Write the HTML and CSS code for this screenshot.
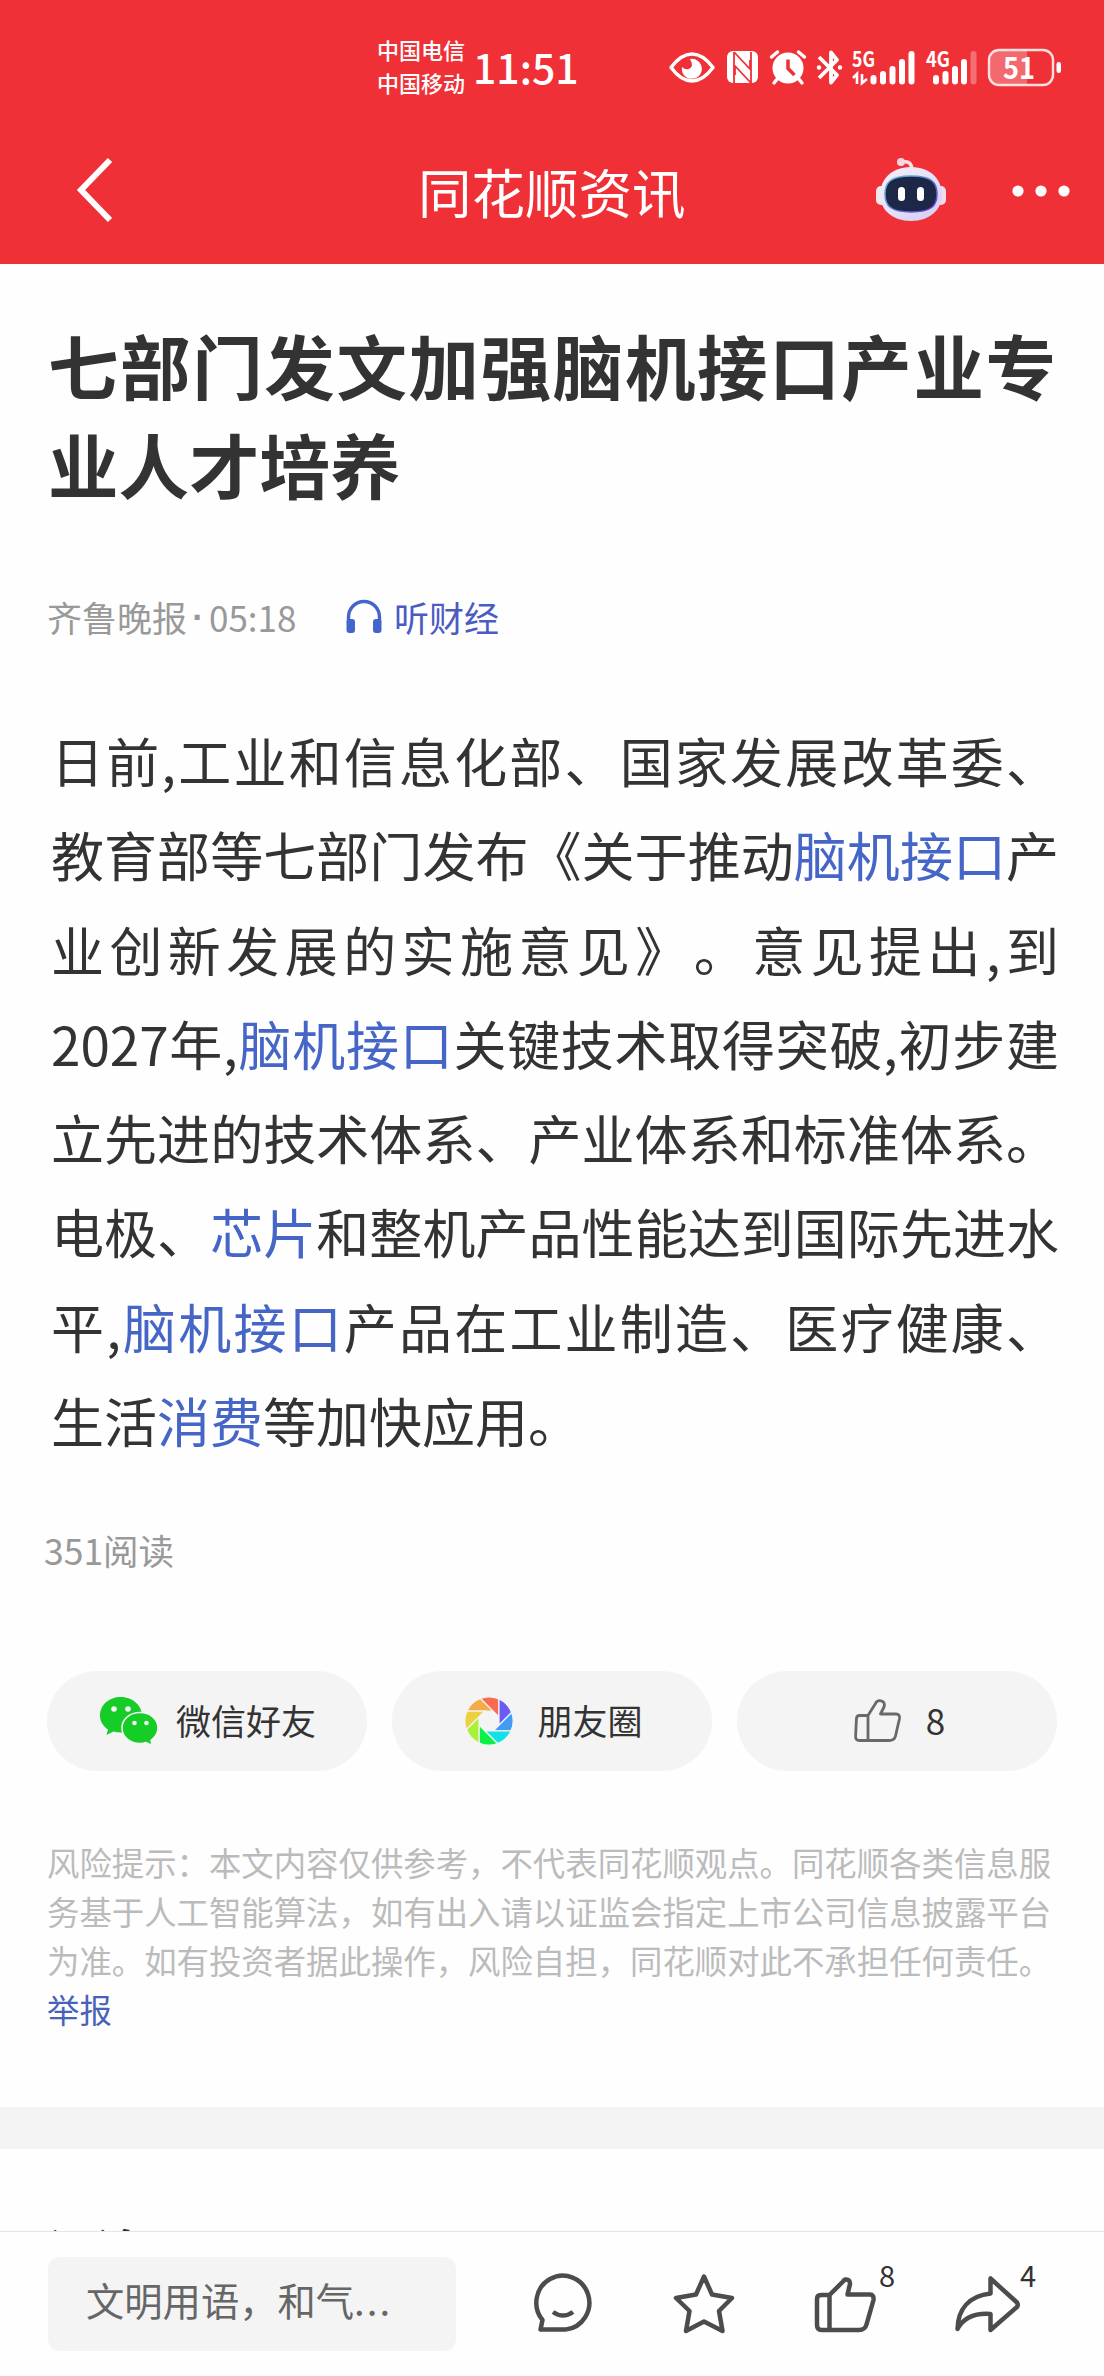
FILE: index.html
```html
<!DOCTYPE html>
<html lang="zh-CN">
<head>
<meta charset="UTF-8">
<title>同花顺资讯</title>
<link rel="stylesheet" href="styles.css">
</head>
<body>

<div class="page">

  <header class="header">
    <div class="status">
      <div class="carriers">
        <span>中国电信</span>
        <span>中国移动</span>
      </div>
      <span class="time">11:51</span>
      <svg class="status-icons" width="400" height="64" viewBox="664 36 400 64" fill="#fff">
        <!-- eye -->
        <path d="M670 67.500Q680 54 691 54T712 67.500Q702 81 691 81T670 67.500Z" fill="none" stroke="#fff" stroke-width="3.500" stroke-linejoin="round"/>
        <path d="M689 59a10 10 0 1 1-8 8q3 3 6.500 2 6-2 1.500-10Z"/>
        <!-- nfc -->
        <rect x="726" y="51" width="31" height="32" rx="6"/>
        <path d="M733 52v31M733 52l16 17v-9M750 83V52M750 83l-16-17v9" fill="none" stroke="#f03037" stroke-width="1.800"/>
        <!-- alarm -->
        <circle cx="787" cy="68" r="15.500"/>
        <path d="M770.500 57l6-5M803.500 57l-6-5M777 78l-4 5M797 78l4 5" stroke="#fff" stroke-width="3.500" stroke-linecap="round"/>
        <path d="M787 59.500v9l6.500 6.500" fill="none" stroke="#f03037" stroke-width="3.500"/>
        <!-- bluetooth -->
        <path d="M818 57l18 18-6 7.500v-30l6 7.500-18 18" fill="none" stroke="#fff" stroke-width="3.800" stroke-linejoin="round"/>
        <circle cx="818" cy="67.500" r="2.200"/>
        <circle cx="839" cy="67.500" r="2.200"/>
        <!-- 5G signal -->
        <text class="net" x="851" y="67" textLength="23" lengthAdjust="spacingAndGlyphs">5G</text>
        <path d="M852 78l4-4v10M861 74v9l5-4" fill="none" stroke="#fff" stroke-width="2.600"/>
        <rect x="869.500" y="75" width="6" height="9.500" rx="3"/>
        <rect x="879" y="71" width="6" height="13.500" rx="3"/>
        <rect x="888.500" y="66" width="6" height="18.500" rx="3"/>
        <rect x="898" y="59" width="6" height="25.500" rx="3"/>
        <rect x="907.500" y="51" width="6" height="33.500" rx="3"/>
        <!-- 4G signal -->
        <text class="net" x="925" y="67" textLength="24" lengthAdjust="spacingAndGlyphs">4G</text>
        <rect x="932" y="75" width="6" height="9.500" rx="3"/>
        <rect x="941.500" y="71" width="6" height="13.500" rx="3"/>
        <rect x="951" y="66" width="6" height="18.500" rx="3"/>
        <rect x="960" y="59" width="6" height="25.500" rx="3"/>
        <rect x="969.500" y="51" width="6" height="33.500" rx="3" opacity=".3"/>
        <!-- battery -->
        <path d="M1026 51h-28q-9 0-9 9v15q0 9 9 9h28Z" opacity=".28"/>
        <rect x="988" y="50" width="64" height="35" rx="10" fill="none" stroke="#fff" stroke-width="2.400" opacity=".85"/>
        <rect x="1055.500" y="62" width="4.500" height="11" rx="2.200"/>
        <text class="battery" x="1002" y="78.500" textLength="32" lengthAdjust="spacingAndGlyphs">51</text>
      </svg>
    </div>

    <div class="nav">
      <svg class="back" width="44" height="70" viewBox="0 0 44 70"><path d="M37 4L8 34l29 30" fill="none" stroke="#fff" stroke-width="6"/></svg>
      <span class="nav-title">同花顺资讯</span>
      <svg class="bot" width="72" height="68" viewBox="0 0 72 68">
        <defs>
          <linearGradient id="head" x1="0" y1="0" x2="1" y2="1">
            <stop offset="0" stop-color="#f7f0f8"/>
            <stop offset=".5" stop-color="#e3e2f6"/>
            <stop offset="1" stop-color="#d5c8f4"/>
          </linearGradient>
          <linearGradient id="rim" x1="0" y1="0" x2="1" y2="1">
            <stop offset="0" stop-color="#5fc3cf"/>
            <stop offset="1" stop-color="#6532d0"/>
          </linearGradient>
        </defs>
        <path d="M27 5q9-2 10 7" fill="none" stroke="#fbdde6" stroke-width="3.500"/>
        <circle cx="26" cy="5" r="4" fill="#fbd5de"/>
        <rect x="1" y="29" width="10" height="19" rx="5" fill="#f3e6f0"/>
        <rect x="61" y="29" width="10" height="19" rx="5" fill="#f0dcee"/>
        <path d="M36 10c21 0 31 14 31 28S55 64 36 64 5 52 5 38s10-28 31-28Z" fill="url(#head)"/>
        <path d="M36 19c20 0 26 6 26 18s-6 18-26 18-26-6-26-18 6-18 26-18Z" fill="#1d2748" stroke="url(#rim)" stroke-width="1.500"/>
        <rect x="23" y="30" width="7" height="14" rx="3.500" fill="#fff"/>
        <rect x="42" y="30" width="7" height="14" rx="3.500" fill="#fff"/>
      </svg>
      <svg class="more" width="60" height="12" viewBox="0 0 60 12" fill="#fff"><circle cx="7" cy="6" r="5.600"/><circle cx="30" cy="6" r="5.600"/><circle cx="53" cy="6" r="5.600"/></svg>
    </div>
  </header>

  <main class="content">
    <article class="article">
      <h1>
        <span class="line full">七部门发文加强脑机接口产业专</span>
        <span class="line">业人才培养</span>
      </h1>

      <div class="meta">
        <span class="source">齐鲁晚报<i>·</i>05:18</span>
        <svg width="38" height="36" viewBox="0 0 38 36">
          <path d="M3.500 24V18a15.500 15.500 0 0 1 31 0v6" fill="none" stroke="#4465cc" stroke-width="3.400"/>
          <rect x="1.500" y="20" width="8.500" height="14" rx="3" fill="#4465cc"/>
          <rect x="28" y="20" width="8.500" height="14" rx="3" fill="#4465cc"/>
        </svg>
        <span class="listen">听财经</span>
      </div>

      <p class="text">
        <span class="line full">日前,工业和信息化部、国家发展改革委、</span>
        <span class="line full">教育部等七部门发布《关于推动<a>脑机接口</a>产</span>
        <span class="line full">业创新发展的实施意见》。意见提出,到</span>
        <span class="line full">2027年,<a>脑机接口</a>关键技术取得突破,初步建</span>
        <span class="line full">立先进的技术体系、产业体系和标准体系。</span>
        <span class="line full">电极、<a>芯片</a>和整机产品性能达到国际先进水</span>
        <span class="line full">平,<a>脑机接口</a>产品在工业制造、医疗健康、</span>
        <span class="line">生活<a>消费</a>等加快应用。</span>
      </p>

      <div class="reads">351阅读</div>

      <div class="share">
        <div class="pill">
          <svg width="58" height="50" viewBox="0 0 58 50">
            <path d="M21 1C9 1 0 9 0 19.500c0 6 3 10.500 8 14L6.500 39l7-3.500q3.500 1 7.500 1c12 0 21-7.500 21-17S33 1 21 1Z" fill="#16cc27"/>
            <path d="M40 16.500c-10 0-18 6.500-18 15.500s8 15.500 18 15.500q3.500 0 6-1l6.500 3-1.500-5c4-3 7-7 7-12.500 0-9-8-15.500-18-15.500Z" fill="#16cc27" stroke="#f4f4f4" stroke-width="1.600"/>
            <g fill="#f4f4f4"><circle cx="14" cy="13" r="2.800"/><circle cx="28" cy="13" r="2.800"/><circle cx="34.500" cy="27" r="2.300"/><circle cx="46.500" cy="27" r="2.300"/></g>
          </svg>
          <span>微信好友</span>
        </div>
        <div class="pill moments">
          <svg width="50" height="50" viewBox="-25 -25 50 50" stroke="#f4f4f4" stroke-width="1.200">
            <path d="M-22-10A24 24 0 0 1-8.500-22.500L4.100-10Z" fill="#f5ab46"/>
            <path d="M-22-10A24 24 0 0 1-8.500-22.500L4.100-10Z" fill="#fa6b51" transform="rotate(45)"/>
            <path d="M-22-10A24 24 0 0 1-8.500-22.500L4.100-10Z" fill="#6b5bf5" transform="rotate(90)"/>
            <path d="M-22-10A24 24 0 0 1-8.500-22.500L4.100-10Z" fill="#429cf1" transform="rotate(135)"/>
            <path d="M-22-10A24 24 0 0 1-8.500-22.500L4.100-10Z" fill="#12e1e8" transform="rotate(180)"/>
            <path d="M-22-10A24 24 0 0 1-8.500-22.500L4.100-10Z" fill="#0af046" transform="rotate(225)"/>
            <path d="M-22-10A24 24 0 0 1-8.500-22.500L4.100-10Z" fill="#a9f137" transform="rotate(270)"/>
            <path d="M-22-10A24 24 0 0 1-8.500-22.500L4.100-10Z" fill="#ecd13f" transform="rotate(315)"/>
            <circle r="9.500" fill="#f4f4f4"/>
          </svg>
          <span>朋友圈</span>
        </div>
        <div class="pill like">
          <svg width="48" height="44" viewBox="0 0 48 44" fill="none" stroke="#696969" stroke-width="2.800" stroke-linejoin="round">
            <path d="M14 16.500H5.500Q2.500 16.500 2.400 20L1.600 37.500Q1.600 41.500 5.500 41.500H35Q40.500 41.500 41.500 37L45.500 19.500Q46 15 42 15H26.500L30 8Q31.500 3 27 1.800 23 1 21.500 4.500L14 16.500V41.500"/>
          </svg>
          <span>8</span>
        </div>
      </div>

      <p class="risk">
        <span class="line">风险提示：本文内容仅供参考，不代表同花顺观点。同花顺各类信息服</span>
        <span class="line">务基于人工智能算法，如有出入请以证监会指定上市公司信息披露平台</span>
        <span class="line">为准。如有投资者据此操作，风险自担，同花顺对此不承担任何责任。</span>
        <a class="line">举报</a>
      </p>
    </article>

    <section class="comments">
      <h2>评论</h2>
    </section>
  </main>

  <footer class="toolbar">
    <div class="input">文明用语，和气<span class="dots">...</span></div>
    <div class="actions">
      <div class="action">
        <svg width="64" height="62" viewBox="0 0 64 62"><path d="M35 57.500A26.500 27 0 1 0 11.500 48L9.500 57.500H35M22 40q10 7 20 0"/></svg>
      </div>
      <div class="action">
        <svg width="64" height="62" viewBox="0 0 64 62"><path d="M32 4.500L40 22.500 60 26 47 39 50.500 59 32 49.500 14 59 17.500 39 4 26 24 22.500Z"/></svg>
      </div>
      <div class="action">
        <svg width="64" height="62" viewBox="0 0 64 62"><path d="M16.500 23H8Q4 23 4 27V53Q4 58 8.500 58H46Q52 58 53.500 52.500L60.500 28Q61 22.500 57 22.500H34.500L37 12Q37 7 32.500 7.500 31 8 30 9.500L16.500 23V58"/></svg>
        <span class="count">8</span>
      </div>
      <div class="action">
        <svg width="64" height="62" viewBox="0 0 64 62"><path d="M36.500 6.500V21.500C15 24 4 37 3.500 57 10 45 21 41 36.500 42V58L63 35Q64.500 33 63 30.500L36.500 6.500Z"/></svg>
        <span class="count">4</span>
      </div>
    </div>
  </footer>

</div>

</body>
</html>
```
FILE: styles.css
```css
body {
  margin: 0;
  font-family: "Noto Sans CJK SC", sans-serif;
  color: #333;
  background: #fefefe;
  text-spacing-trim: space-all;
}

h1, h2, p {
  margin: 0;
}

svg {
  display: block;
  flex: none;
  overflow: visible;
}

.page {
  display: flex;
  flex-direction: column;
  height: 2376px;
  overflow: hidden;
}

.line {
  display: block;
  white-space: nowrap;
}

.full {
  text-align: justify;
  text-align-last: justify;
}

/* header */
.header {
  height: 264px;
  flex: none;
  background: #f03037;
  color: #fff;
}

.status {
  display: flex;
  align-items: center;
  height: 136px;
  padding-left: 377px;
}

.carriers {
  display: flex;
  flex-direction: column;
  width: 96px;
  font-size: 22px;
  line-height: 33px;
  font-weight: 500;
  margin-top: -4px;
}

.time {
  width: 99px;
  margin-top: -5px;
  font-size: 41px;
  line-height: 50px;
  font-weight: 500;
}

.status-icons {
  margin-left: 93px;
}

.net {
  font-size: 21px;
  font-weight: 700;
}

.battery {
  font-size: 30px;
  font-weight: 700;
}

.nav {
  display: flex;
  align-items: center;
  height: 110px;
  padding-left: 73px;
}

.nav-title {
  width: 270px;
  margin-left: 301px;
  font-size: 53.5px;
  line-height: 70px;
  white-space: nowrap;
}

.bot {
  margin-left: 187px;
}

.more {
  margin-left: 64px;
}

/* article */
.content {
  flex: 1;
  min-height: 0;
  overflow: hidden;
}

.article {
  padding: 51px 47px 73px;
}

h1 {
  width: 1008px;
  padding: 0 0 0 1px;
  font-size: 70.5px;
  line-height: 99px;
  font-weight: 700;
}

.meta {
  display: flex;
  align-items: center;
  height: 50px;
  margin-top: 79px;
  font-size: 35px;
  line-height: 50px;
}

.source {
  display: flex;
  width: 298px;
  color: #999;
}

.source i {
  width: 22px;
  font-family: "Liberation Sans", sans-serif;
  font-style: normal;
  font-weight: 700;
  text-align: center;
}

.listen {
  margin-left: 11px;
  color: #4a5bc4;
}

.text {
  margin: 71px 0 0;
  padding: 0 0 0 4px;
  width: 1008px;
  font-size: 53px;
  line-height: 94.3px;
}

.text a {
  color: #4566c6;
}

.reads {
  margin: 58px 0 0 -3px;
  font-size: 35.5px;
  line-height: 50px;
  color: #999;
}

.share {
  display: grid;
  grid-template-columns: repeat(3, 1fr);
  gap: 25px;
  margin-top: 96px;
}

.pill {
  display: flex;
  align-items: center;
  justify-content: center;
  gap: 18px;
  height: 100px;
  padding-left: 2px;
  border-radius: 50px;
  background: #f4f4f4;
  font-size: 35px;
  line-height: 50px;
}

.pill span {
  margin-top: -2px;
}

.moments {
  gap: 23px;
  padding-left: 3px;
}

.like {
  gap: 24px;
  padding-left: 5px;
}

.risk {
  margin-top: 67px;
  font-size: 32.4px;
  line-height: 48.8px;
  color: #bbb;
}

.risk a {
  color: #4663b8;
}

.comments {
  border-top: 42px solid #f4f4f4;
  padding: 70px 48px 0;
}

h2 {
  font-size: 47px;
  line-height: 60px;
}

/* bottom bar */
.toolbar {
  display: flex;
  flex: none;
  box-sizing: border-box;
  height: 145px;
  padding: 25px 0 0 48px;
  border-top: 1px solid #e6e6e6;
  background: #fefefe;
}

.input {
  box-sizing: border-box;
  width: 408px;
  height: 94px;
  padding-left: 38px;
  border-radius: 12px;
  background: #f4f4f4;
  color: #666;
  font-size: 38.3px;
  line-height: 86px;
}

.dots {
  letter-spacing: 2px;
}

.actions {
  display: flex;
  gap: 77px;
  padding: 15px 0 0 75px;
}

.action {
  position: relative;
  width: 64px;
}

.action svg {
  fill: none;
  stroke: #4c4c4c;
  stroke-width: 4.5;
  stroke-linejoin: round;
}

.count {
  position: absolute;
  left: 66px;
  top: -18px;
  font-size: 29px;
  line-height: 40px;
}
```
